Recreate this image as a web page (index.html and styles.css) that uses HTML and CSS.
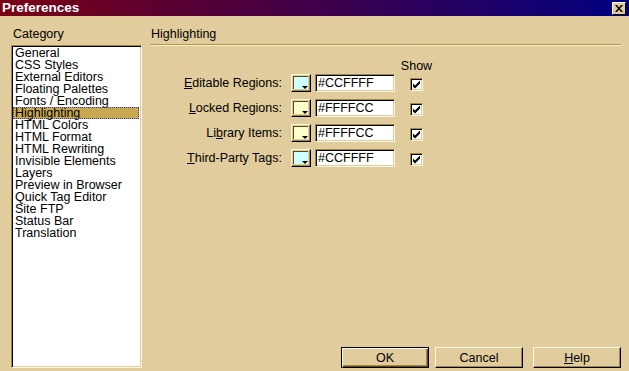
FILE: index.html
```html
<!DOCTYPE html>
<html lang="en">
<head>
  <meta charset="UTF-8">
  <title>Preferences</title>
  <link rel="stylesheet" href="styles.css">
</head>
<body>
  <div class="window">
    <div class="titlebar">
      <span class="title">Preferences</span>
      <span class="close">
        <svg width="8" height="7" viewBox="0 0 8 7"><path d="M0 0h2l2 2.5L6 0h2L5 3.5 8 7H6L4 4.5 2 7H0l3-3.5z" fill="#000"/></svg>
      </span>
    </div>

    <div class="content">
      <div class="left">
        <div class="caption">Category</div>
        <ul class="list">
          <li>General</li>
          <li>CSS Styles</li>
          <li>External Editors</li>
          <li>Floating Palettes</li>
          <li>Fonts / Encoding</li>
          <li class="selected">Highlighting</li>
          <li>HTML Colors</li>
          <li>HTML Format</li>
          <li>HTML Rewriting</li>
          <li>Invisible Elements</li>
          <li>Layers</li>
          <li>Preview in Browser</li>
          <li>Quick Tag Editor</li>
          <li>Site FTP</li>
          <li>Status Bar</li>
          <li>Translation</li>
        </ul>
      </div>

      <div class="right">
        <div class="caption header">Highlighting</div>

        <div class="form">
          <div class="row head">
            <span class="show-col">Show</span>
          </div>
          <div class="row">
            <label><u>E</u>ditable Regions:</label>
            <span class="swatch"><span class="fill cyan"></span></span>
            <span class="hex">#CCFFFF</span>
            <span class="show-col"><span class="check"><svg width="9" height="9" viewBox="0 0 9 9"><path d="M1 3.5l2 2 5-5v3L3 8.5l-2-2z" fill="#000"/></svg></span></span>
          </div>
          <div class="row">
            <label><u>L</u>ocked Regions:</label>
            <span class="swatch"><span class="fill cream"></span></span>
            <span class="hex">#FFFFCC</span>
            <span class="show-col"><span class="check"><svg width="9" height="9" viewBox="0 0 9 9"><path d="M1 3.5l2 2 5-5v3L3 8.5l-2-2z" fill="#000"/></svg></span></span>
          </div>
          <div class="row">
            <label>Li<u>b</u>rary Items:</label>
            <span class="swatch"><span class="fill cream"></span></span>
            <span class="hex">#FFFFCC</span>
            <span class="show-col"><span class="check"><svg width="9" height="9" viewBox="0 0 9 9"><path d="M1 3.5l2 2 5-5v3L3 8.5l-2-2z" fill="#000"/></svg></span></span>
          </div>
          <div class="row">
            <label><u>T</u>hird-Party Tags:</label>
            <span class="swatch"><span class="fill cyan"></span></span>
            <span class="hex">#CCFFFF</span>
            <span class="show-col"><span class="check"><svg width="9" height="9" viewBox="0 0 9 9"><path d="M1 3.5l2 2 5-5v3L3 8.5l-2-2z" fill="#000"/></svg></span></span>
          </div>
        </div>

        <div class="buttons">
          <button class="default">OK</button>
          <button class="cancel">Cancel</button>
          <button class="help"><u>H</u>elp</button>
        </div>
      </div>
    </div>
  </div>
</body>
</html>
```

FILE: styles.css
```css
body {
  margin: 0;
  font-family: 'Liberation Sans', Arial, sans-serif;
  font-size: 12.5px;
  color: #000;
  background-color: #e0cc9c;
}

.window {
  width: 629px;
  height: 371px;
  display: flex;
  flex-direction: column;
  overflow: hidden;
}

.titlebar {
  height: 16px;
  flex-shrink: 0;
  display: flex;
  align-items: center;
  justify-content: space-between;
  padding: 0 3px 0 2px;
  background: linear-gradient(to right, #7a0014, #40004a 50%, #000080);
}

.title {
  color: white;
  font-weight: bold;
  font-size: 13.5px;
  line-height: 16px;
}

.close {
  width: 12px;
  height: 11px;
  margin-top: 1px;
  background-color: #e0cc9c;
  border: 1px solid;
  border-color: #fff8e0 #000 #000 #fff8e0;
  display: flex;
  align-items: center;
  justify-content: center;
}

.content {
  flex: 1;
  display: flex;
}

.caption {
  line-height: 14px;
  padding-left: 2px;
}

.left {
  width: 131px;
  margin-left: 11px;
  padding-top: 11px;
  display: flex;
  flex-direction: column;
}

.left .caption {
  margin-bottom: 4px;
}

.list {
  list-style: none;
  margin: 0;
  padding: 0;
  height: 323px;
  box-sizing: border-box;
  background-color: white;
  border: 1px solid;
  border-color: #a08840 #fff8e0 #fff8e0 #a08840;
  box-shadow: inset 1px 1px 0 #000, inset -1px -1px 0 #e0cc9c;
  padding: 1px 2px 0 1px;
}

.list li {
  line-height: 12px;
  height: 12px;
  padding-left: 2px;
}

.list li.selected {
  background-color: #c8a850;
  outline: 1px dotted #3a3aa0;
  outline-offset: -1px;
}

.right {
  flex: 1;
  margin-left: 8px;
  margin-right: 8px;
  padding-top: 11px;
  display: flex;
  flex-direction: column;
}

.header {
  padding-left: 1px;
  padding-bottom: 3px;
  border-bottom: 1px solid #b8963c;
  box-shadow: 0 1px 0 #f8f0d4;
}

.form {
  margin-top: 14px;
}

.row {
  display: flex;
  align-items: center;
  height: 18px;
  margin-bottom: 7px;
}

.row.head {
  height: 14px;
  margin-bottom: 1px;
}

.row.head .show-col {
  margin-left: 251px;
}

.row label {
  width: 132px;
  text-align: right;
  margin-right: 9px;
}

.swatch {
  position: relative;
  width: 20px;
  height: 18px;
  box-sizing: border-box;
  margin-right: 4px;
  border: 1px solid;
  border-color: #fff8e0 #000 #000 #fff8e0;
  box-shadow: inset -1px -1px 0 #a08840;
  padding: 1px 2px 2px 1px;
}

.swatch .fill {
  display: block;
  height: 100%;
  box-sizing: border-box;
  border-top: 1px solid #604810;
  border-left: 1px solid #604810;
}

.swatch::after {
  content: "";
  position: absolute;
  right: 2px;
  bottom: 2px;
  border-left: 3px solid transparent;
  border-right: 3px solid transparent;
  border-top: 3px solid #000;
}

.cyan {
  background-color: #ccffff;
}

.cream {
  background-color: #ffffcc;
}

.hex {
  width: 80px;
  height: 18px;
  box-sizing: border-box;
  background-color: white;
  border: 1px solid;
  border-color: #a08840 #fff8e0 #fff8e0 #a08840;
  box-shadow: inset 1px 1px 0 #000, inset -1px -1px 0 #e0cc9c;
  padding: 0 0 0 2px;
  line-height: 16px;
}

.show-col {
  width: 31px;
  margin-left: 6px;
  display: flex;
  justify-content: center;
  line-height: 14px;
}

.check {
  width: 13px;
  height: 13px;
  margin-top: 2px;
  box-sizing: border-box;
  background-color: white;
  border: 1px solid;
  border-color: #a08840 #fff8e0 #fff8e0 #a08840;
  box-shadow: inset 1px 1px 0 #000, inset -1px -1px 0 #e0cc9c;
  display: flex;
  align-items: center;
  justify-content: center;
}

.buttons {
  margin-top: auto;
  margin-bottom: 3px;
  display: flex;
  padding-left: 191px;
}

button {
  width: 88px;
  height: 21px;
  box-sizing: border-box;
  font-family: 'Liberation Sans', Arial, sans-serif;
  font-size: 12.5px;
  color: #000;
  background-color: #e0cc9c;
  border: 1px solid;
  border-color: #fff8e0 #000 #000 #fff8e0;
  box-shadow: inset -1px -1px 0 #a08840;
  padding: 0;
}

button.default {
  border: 1px solid #000;
  box-shadow: inset 1px 1px 0 #fff8e0, inset -1px -1px 0 #604810, inset -2px -2px 0 #a08840;
}

button.cancel {
  margin-left: 6px;
}

button.help {
  margin-left: 10px;
}
```
